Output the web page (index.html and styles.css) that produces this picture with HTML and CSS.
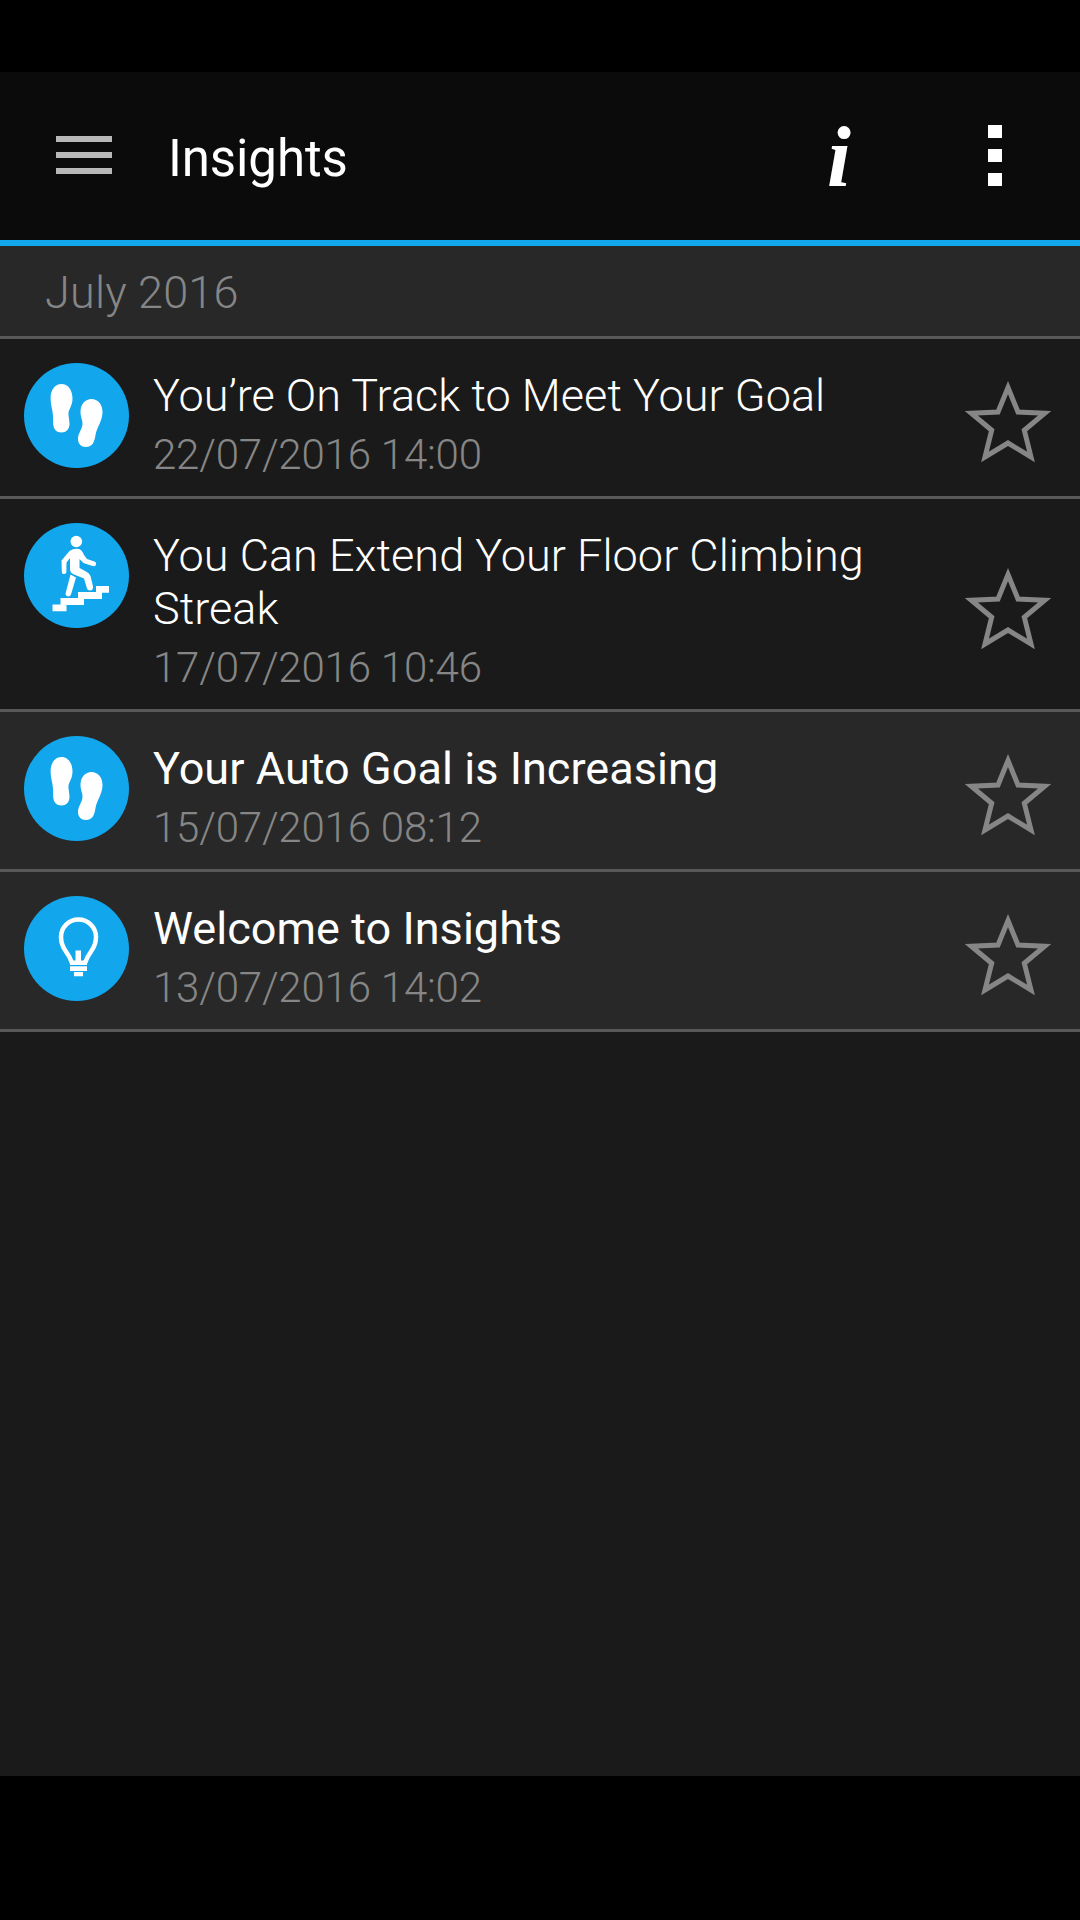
FILE: index.html
```html
<!DOCTYPE html>
<html lang="en">
<head>
    <meta charset="UTF-8">
    <meta name="viewport" content="width=device-width, initial-scale=1.0">
    <title>Insights</title>
    <link rel="stylesheet" href="styles.css">
</head>
<body>
    <!-- shared icons -->
    <svg class="sprite" aria-hidden="true">
        <symbol id="steps" viewBox="0 0 105 105">
            <path d="M37.500 21C44 21 48.500 27 48.500 35.500C48.500 44 44 46 44.500 52C45 56 45.500 59 45.500 61C45.500 66 42 69.500 37.500 69.500C32.500 69.500 29.500 66 29.200 61C29.200 54 29 51 28 46C27.200 42 26.600 39 26.600 35C26.600 27 31 21 37.500 21Z"/>
            <path d="M67.500 36C73.500 36 78.500 41 78.500 49C78.500 58 73 64 71.500 72C70.500 79 68.500 84 62 84C57 84 54 80.500 54 76C54 70 58.500 66 58.500 60.500C58.500 56.500 56.500 54 56.500 49C56.500 41 61.500 36 67.500 36Z"/>
        </symbol>
        <symbol id="star" viewBox="0 0 86 82">
            <path d="M43 7.500L53 32L79.700 33.300L59.300 50.200L66 77L43 63L20 77L26.700 50.200L6.300 33.300L33 32Z"/>
        </symbol>
    </svg>

    <header class="top-bar">
        <button class="menu-button" aria-label="Menu"><span></span><span></span><span></span></button>
        <h1>Insights</h1>
        <button class="info-button" aria-label="Info">i</button>
        <button class="more-button" aria-label="More"><span></span><span></span><span></span></button>
    </header>

    <main class="insights">
        <h2 class="month">July 2016</h2>
        <div class="insight">
            <svg class="badge"><use href="#steps"/></svg>
            <div class="details">
                <h3>You’re On Track to Meet Your Goal</h3>
                <p>22/07/2016 14:00</p>
            </div>
            <svg class="star"><use href="#star"/></svg>
        </div>
        <div class="insight">
            <svg class="badge" viewBox="0 0 105 105">
                <circle cx="52.300" cy="18.500" r="5.800"/>
                <path d="M45.500 28Q50 25 55 26Q58 27 60 32L63 36L70.500 38.500Q73 39.500 71.500 42.500Q70.500 43.500 68.500 43L59.500 40L55.500 36V45L62 48.500Q65.500 50 66.500 53L69 63.500Q69.300 67.500 66 67.500Q63.500 67.500 62.800 65L60 55.500L50 51.500Q46 50 46 46V35L42.500 39.500L42.300 49.500Q41.500 51.500 39 51Q37.800 50.500 37.800 49L37.500 37.500Z"/>
                <path d="M46.500 51.500L52 54.500L47 71.500Q46 73.800 43.500 73.300Q41 72.500 41.800 69.500Z"/>
                <path d="M28.500 81.500H36.500V75H54V69H72V63H85V69.800H78V76H60V82H42.500V88.300H28.500Z"/>
            </svg>
            <div class="details">
                <h3>You Can Extend Your Floor Climbing Streak</h3>
                <p>17/07/2016 10:46</p>
            </div>
            <svg class="star"><use href="#star"/></svg>
        </div>
        <div class="insight unread">
            <svg class="badge"><use href="#steps"/></svg>
            <div class="details">
                <h3>Your Auto Goal is Increasing</h3>
                <p>15/07/2016 08:12</p>
            </div>
            <svg class="star"><use href="#star"/></svg>
        </div>
        <div class="insight unread">
            <svg class="badge" viewBox="0 0 105 105">
                <path class="bulb" d="M48 67Q46 61 41 54Q37 48 37 41A17.500 17.500 0 0 1 72 41Q72 48 68 54Q63 61 61 67"/>
                <path d="M46 64.500H51.500V54.500H57V64.500H63V69H46ZM46 70.300H63V75H46ZM50 76H59V80.300H50Z"/>
            </svg>
            <div class="details">
                <h3>Welcome to Insights</h3>
                <p>13/07/2016 14:02</p>
            </div>
            <svg class="star"><use href="#star"/></svg>
        </div>
    </main>
</body>
</html>
```

FILE: styles.css
```css
* {
    margin: 0;
    padding: 0;
    box-sizing: border-box;
}
body {
    font-family: Roboto, sans-serif;
    background-color: #000;
    color: white;
    height: 1920px;
    padding: 72px 0 144px;
    display: flex;
    flex-direction: column;
}
button {
    background: none;
    border: none;
    color: white;
}
.sprite {
    display: none;
}
.top-bar {
    height: 174px;
    flex-shrink: 0;
    display: flex;
    align-items: center;
    padding: 0 78px 0 56px;
    background-color: #0b0b0b;
    border-bottom: 6px solid #12a7ec;
}
.top-bar h1 {
    flex: 1;
    margin: 6px 0 0 56px;
    font-size: 51px;
    font-weight: 400;
    letter-spacing: -0.1px;
    line-height: 60px;
}
.menu-button {
    width: 56px;
    display: flex;
    flex-direction: column;
    gap: 10px;
    margin-bottom: 2px;
}
.menu-button span {
    height: 6px;
    background-color: #b8b8b8;
}
.info-button {
    width: 24px;
    margin: 2px 137px 0 0;
    font: italic bold 86px/100px "Liberation Serif", serif;
}
.more-button {
    width: 14px;
    display: flex;
    flex-direction: column;
    gap: 11px;
    margin-bottom: 1px;
}
.more-button span {
    height: 13px;
    background-color: white;
}
.insights {
    flex: 1;
    background-color: #1a1a1a;
}
.month {
    height: 93px;
    padding: 20px 45px 0;
    background-color: #282828;
    border-bottom: 3px solid #585858;
    color: #868686;
    font-size: 45px;
    font-weight: 300;
    letter-spacing: 0.2px;
    line-height: 53px;
}
.insight {
    display: flex;
    align-items: center;
    padding: 24px 29px 17px 24px;
    border-bottom: 3px solid #585858;
}
.insight.unread {
    background-color: #282828;
}
.badge {
    width: 105px;
    height: 105px;
    align-self: flex-start;
    flex-shrink: 0;
    border-radius: 50%;
    background-color: #12a7ec;
    fill: white;
}
.bulb {
    fill: none;
    stroke: white;
    stroke-width: 4.5;
}
.details {
    flex: 1;
    margin: 6px 24px 0;
}
.details h3 {
    font-size: 45px;
    font-weight: 300;
    letter-spacing: 0.05px;
    line-height: 53px;
}
.unread h3 {
    font-weight: 400;
}
.details p {
    margin-top: 8px;
    color: #868686;
    font-size: 42px;
    font-weight: 300;
    letter-spacing: -0.2px;
    line-height: 49px;
}
.star {
    width: 86px;
    height: 82px;
    flex-shrink: 0;
    fill: none;
    stroke: #868686;
    stroke-width: 5;
}
```
